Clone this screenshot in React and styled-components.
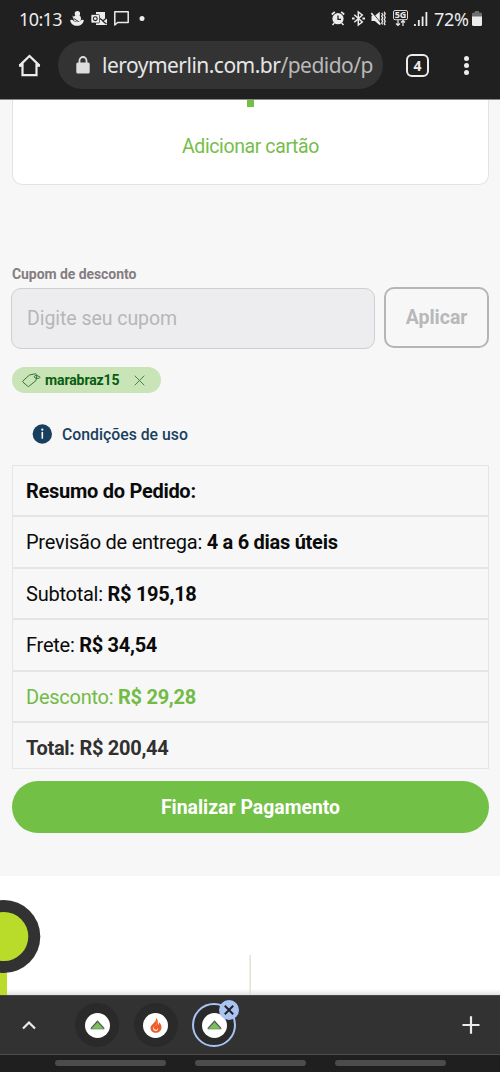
import React from "react";
import styled, { createGlobalStyle } from "styled-components";

const GlobalStyle = createGlobalStyle`
  * {
    box-sizing: border-box;
  }
  body {
    margin: 0;
    background: #ffffff;
    font-family: Roboto, "Liberation Sans", sans-serif;
  }
`;

const Screen = styled.div`
  width: 500px;
  height: 1072px;
  display: flex;
  flex-direction: column;
  overflow: hidden;
`;

/* browser header */
const Header = styled.header`
  height: 100px;
  background: #202020;
  border-bottom: 1px solid #8a8a8a;
  font-family: "Noto Sans", sans-serif;
  color: #ececec;
`;
const StatusBar = styled.div`
  height: 41px;
  display: flex;
  align-items: center;
  padding: 0 18px 4px 19px;
`;
const StatusText = styled.span`
  font-size: 18px;
  line-height: 20px;
  letter-spacing: ${(props) => props.$spacing || "0"};
  width: ${(props) => props.$width};
  white-space: nowrap;
`;
const StatusIcons = styled.div`
  display: flex;
  align-items: center;
  gap: ${(props) => props.$gap};
  margin-left: ${(props) => props.$left || "0"};
  svg {
    display: block;
    overflow: visible;
  }
`;
const Toolbar = styled.div`
  height: 48px;
  display: flex;
  align-items: center;
  padding: 0 28px 0 18px;
  svg {
    display: block;
    flex: none;
  }
`;
const AddressBar = styled.div`
  width: 325px;
  height: 48px;
  margin-left: 17px;
  padding: 0 9px 0 18px;
  border-radius: 24px;
  background: #333333;
  display: flex;
  align-items: center;
`;
const Url = styled.div`
  margin-left: 12px;
  width: 272px;
  overflow: hidden;
  white-space: nowrap;
  font-size: 21px;
  line-height: 30px;
  letter-spacing: -0.52px;
  color: #e6e6e6;
  span {
    color: #b9b9b9;
  }
`;
const TabCount = styled.div`
  width: 23px;
  height: 23px;
  margin-left: 23px;
  border: 2px solid #ececec;
  border-radius: 6px;
  font-size: 14px;
  font-weight: 700;
  line-height: 19px;
  text-align: center;
`;
const MenuDots = styled.div`
  margin-left: auto;
  margin-right: 3px;
  display: flex;
  flex-direction: column;
  gap: 2px;
  i {
    width: 5px;
    height: 5px;
    border-radius: 50%;
    background: #ececec;
  }
`;

/* checkout page */
const Page = styled.main`
  height: 776px;
  padding: 0 11px 0 12px;
  background: #f7f7f7;
`;
const CardBox = styled.section`
  height: 85px;
  display: flex;
  flex-direction: column;
  align-items: center;
  background: #ffffff;
  border: 1px solid #e3e3e3;
  border-top: 0;
  border-radius: 0 0 10px 10px;
`;
const PlusStem = styled.div`
  width: 7px;
  height: 7px;
  background: #72c045;
`;
const AddCard = styled.div`
  margin-top: 28px;
  font-size: 19.5px;
  line-height: 24px;
  letter-spacing: -0.4px;
  color: #76bd4c;
`;
const Label = styled.div`
  margin-top: 79px;
  font-size: 14px;
  font-weight: 700;
  line-height: 20px;
  letter-spacing: -0.07px;
  color: #857d82;
`;
const CouponRow = styled.div`
  display: flex;
  align-items: flex-start;
  margin: 3px 0 0 -1px;
`;
const CouponInput = styled.div`
  width: 365px;
  height: 61px;
  margin: 1px 9px 0 0;
  padding-left: 15px;
  border: 1px solid #cfcfd2;
  border-radius: 10px;
  background: #ededef;
  color: #b6b6b8;
  font-size: 19.5px;
  line-height: 60px;
  letter-spacing: -0.05px;
`;
const ApplyButton = styled.div`
  width: 105px;
  height: 61px;
  border: 2px solid #b5b5b6;
  border-radius: 10px;
  color: #b8b8bb;
  font-size: 19.5px;
  font-weight: 700;
  line-height: 57px;
  text-align: center;
`;
const CouponTag = styled.div`
  width: 149px;
  height: 26px;
  margin-top: 18px;
  padding: 0 16px 0 10px;
  border-radius: 13px;
  background: #c9e4b6;
  display: flex;
  align-items: center;
  color: #075c10;
  font-size: 14px;
  font-weight: 700;
  letter-spacing: -0.1px;
  line-height: 24px;
  span {
    margin: 0 auto 1px 4px;
  }
`;
const Terms = styled.div`
  display: flex;
  align-items: center;
  height: 22px;
  margin: 30px 0 0 20px;
  font-size: 15.8px;
  font-weight: 500;
  letter-spacing: 0;
  color: #193f5f;
  svg {
    margin-right: 10px;
  }
`;
const Summary = styled.section`
  margin-top: 20px;
  border: 1px solid #e5e5e5;
`;
const SummaryRow = styled.div`
  height: ${(props) => props.$height || "51.4px"};
  padding-left: 13px;
  border-bottom: ${(props) => (props.$last ? "0" : "2px solid #e5e5e5")};
  font-size: 20px;
  line-height: 50px;
  letter-spacing: -0.25px;
  color: ${(props) => props.$color || "#0b0b0b"};
  b {
    letter-spacing: -0.28px;
  }
`;
const PayButton = styled.div`
  height: 52px;
  margin-top: 12px;
  border-radius: 26px;
  background: #72c045;
  color: #ffffff;
  font-size: 19.4px;
  font-weight: 700;
  line-height: 53px;
  text-align: center;
`;

/* page footer and the tab strip under it */
const Tracker = styled.section`
  position: relative;
  height: 119px;
  overflow: hidden;
  background: linear-gradient(#ffffff 113px, #e2e2e2 119px);
  svg {
    display: block;
  }
`;
const TabStrip = styled.nav`
  height: 60px;
  padding: 0 19px 0 21px;
  display: flex;
  align-items: center;
  background: #323232;
  border-top: 1px solid #454545;
  border-bottom: 1px solid #4d4d4d;
`;
const Tabs = styled.div`
  display: flex;
  gap: 14.5px;
  margin-left: 38px;
`;
const Tab = styled.div`
  position: relative;
  width: 44px;
  height: 44px;
  display: flex;
  align-items: center;
  justify-content: center;
  border-radius: 50%;
  background: #2a2a2a;
  border: 2px solid ${(props) => (props.$active ? "#a9c4f3" : "#2a2a2a")};
`;
const Favicon = styled.div`
  width: 25px;
  height: 25px;
  border-radius: 50%;
  background: #ffffff;
  display: flex;
  align-items: center;
  justify-content: center;
`;
const CloseBadge = styled.div`
  position: absolute;
  top: -5px;
  right: -4.5px;
  width: 20px;
  height: 20px;
  border-radius: 50%;
  background: #a9c4f3;
  display: flex;
  align-items: center;
  justify-content: center;
`;
const PlusIcon = styled.svg`
  margin-left: auto;
`;
const NavBar = styled.div`
  flex: 1;
  padding: 5px 54.5px 0 54.5px;
  display: flex;
  justify-content: space-between;
  background: #1f1f1f;
  i {
    width: 111px;
    height: 6px;
    border-radius: 3px;
    background: #4c4c4c;
  }
`;

const GalaxyIcon = () => (
  <svg width="14" height="15" viewBox="0 0 14 15" fill="#ececec">
    <circle cx="7.400" cy="2.700" r="2.700" />
    <ellipse cx="7.300" cy="7.500" rx="3.700" ry="3.200" />
    <path d="M2.300 4.500 5 6.500 3.500 8z" />
    <path d="M.2 9.200c1.500-.8 2.500-.3 3.300.6 1.800 1.700 5 1.700 6.700 0 1.200-1.200 2.300-1.300 3.600-.6-.4 3.200-3 5.600-6.800 5.600S.6 12.400.2 9.200z" />
    <path d="m3.800 7.500 4.700 3" fill="none" stroke="#202020" strokeWidth=".9" />
  </svg>
);

const OutlookIcon = () => (
  <svg width="16" height="14" viewBox="0 0 16 14">
    <path d="M5 0h9v7H5z" fill="#ececec" />
    <path d="M5 6.500h11V13H5z" fill="#ececec" />
    <path d="m9 6.500 3 2.300L15.700 6M11.500 9l4 3" stroke="#202020" strokeWidth="1.200" fill="none" />
    <rect x="0" y="2.500" width="8.500" height="8.500" rx="1" fill="#ececec" stroke="#202020" strokeWidth=".7" />
    <circle cx="4.300" cy="6.700" r="1.900" fill="none" stroke="#202020" strokeWidth="1.100" />
  </svg>
);

const ChatIcon = () => (
  <svg width="15" height="15" viewBox="0 0 15 15" fill="none" stroke="#ececec" strokeWidth="1.500">
    <path d="M.8.8h13.400v10.700H3.600L.8 14z" strokeLinejoin="round" />
  </svg>
);

const AlarmIcon = () => (
  <svg width="14" height="15" viewBox="0 0 14 15" fill="none" stroke="#ececec">
    <circle cx="7" cy="7.700" r="5.600" fill="#ececec" stroke="none" />
    <path d="M.8 3.500 3.800.9M10.200.9l3 2.600" strokeWidth="1.700" />
    <path d="m3.300 12-1.800 2M10.700 12l1.800 2" strokeWidth="1.500" />
    <path d="M7 4.500v3.800h3" stroke="#202020" strokeWidth="1.300" />
  </svg>
);

const BluetoothIcon = () => (
  <svg width="13" height="15" viewBox="0 0 13 15" fill="none" stroke="#ececec" strokeWidth="1.500">
    <path d="m2.300 3.700 8 7.300-4 3V1l4 3-8 7.300" />
    <path d="M0 7.500h2.600M10.400 7.500H13" strokeWidth="1.900" />
  </svg>
);

const MuteIcon = () => (
  <svg width="15" height="15" viewBox="0 0 15 15" fill="none" stroke="#ececec">
    <path d="M.5 4.800h3.300L8.800.7v13.600l-5-4.300H.5z" fill="#ececec" stroke="none" />
    <path d="m1.500 1.500 8.300 10.500" stroke="#202020" strokeWidth=".9" />
    <path d="m.3 2 9 11.500" strokeWidth="1.600" />
    <path d="m10.700 1.800 1 1.700-1 1.700 1 1.700-1 1.700 1 1.700-1 1.700 1 1.500M13.200.8l1 1.900-1 1.900 1 1.900-1 1.900 1 1.900-1 1.900 1 1.900" strokeWidth="1.300" />
  </svg>
);

const NetworkIcon = () => (
  <svg width="15" height="17" viewBox="0 0 15 17" fill="none" stroke="#ececec">
    <rect x=".5" y=".5" width="14" height="9.200" rx="1.500" strokeWidth=".9" />
    <text x="7.500" y="8.100" fill="#ececec" stroke="none" fontSize="9" fontWeight="700" textAnchor="middle">5G</text>
    <path d="M5 10v5.500M3 13.500l2 2 2-2M10 16v-5.500M8 12.500l2-2 2 2" strokeWidth="1.200" />
  </svg>
);

const SignalIcon = () => (
  <svg width="14" height="14" viewBox="0 0 14 14" fill="#ececec">
    <rect x="0" y="12" width="1.800" height="2" />
    <rect x="3.900" y="8" width="1.800" height="6" />
    <rect x="7.700" y="4.500" width="1.800" height="9.500" />
    <rect x="11.500" y="0" width="1.800" height="14" />
  </svg>
);

const BatteryIcon = () => (
  <svg width="10" height="15" viewBox="0 0 10 15">
    <path d="M3 0h4v1.500h1.500A1.500 1.500 0 0 1 10 3v3H0V3a1.500 1.500 0 0 1 1.500-1.500H3z" fill="#6e6e6e" />
    <path d="M0 5.500h10v8A1.500 1.500 0 0 1 8.500 15h-7A1.500 1.500 0 0 1 0 13.500z" fill="#ececec" />
  </svg>
);

const HomeIcon = () => (
  <svg width="23" height="23" viewBox="0 0 23 23" fill="none" stroke="#ececec" strokeWidth="2.200">
    <path d="M1.500 11.600 11.500 2l10 9.600M4.500 9.500v11.700h14V9.500" />
    <path d="M1 11.700h3.500M18.500 11.700H22" />
  </svg>
);

const LockIcon = () => (
  <svg width="14" height="18" viewBox="0 0 14 18">
    <rect x=".3" y="6.500" width="13.400" height="11" rx="1.500" fill="#dedede" />
    <path d="M3.500 7V4.500a3.500 3.500 0 0 1 7 0V7" fill="none" stroke="#dedede" strokeWidth="1.800" />
  </svg>
);

const TagIcon = () => (
  <svg width="19" height="16" viewBox="0 0 19 16" fill="none" stroke="#28682b" strokeWidth=".9">
    <path d="M1.200 8.600 7.500 3l5.800-1.200c.9 0 1.600.8 1.500 1.700L14 8.500 7.300 14c-.7.600-1.500.5-2-.1L1 10.200c-.4-.5-.3-1.200.2-1.600z" />
    <path d="M12.500 4c.9-.8 2-.6 3.200-.1l2.100.9c.3 1-.6 1.700-1.800 1.600l-3-.5c-.8-.4-.9-1.300-.5-1.900z" />
  </svg>
);

const CloseIcon = () => (
  <svg width="11" height="11" viewBox="0 0 11 11" stroke="#3d7740" strokeWidth=".9">
    <path d="m.7.7 9.600 9.600M10.300.7.700 10.300" />
  </svg>
);

const InfoIcon = () => (
  <svg width="20" height="20" viewBox="0 0 20 20">
    <circle cx="10.300" cy="10" r="9.700" fill="#193f5f" />
    <path d="M10.300 7.900v6.800" stroke="#fff" strokeWidth="1.600" />
    <circle cx="10.300" cy="5.700" r="1.100" fill="#fff" />
  </svg>
);

const RoofLogo = () => (
  <svg width="15" height="10" viewBox="0 0 15 10">
    <path d="M7.500 1.500 13.500 9h-12z" fill="#78c257" />
    <path d="M.8 8.800 7.500 1.200l6.700 7.600" fill="none" stroke="#565d59" strokeWidth="1.300" />
    <path d="M1 9h13" stroke="#6b8a60" strokeWidth=".7" />
  </svg>
);

const FlameLogo = () => (
  <svg width="12" height="15" viewBox="0 0 12 15">
    <path d="M6 0c.5 2.500-1.200 4-2.700 5.500C1.500 7.200.5 8.300.5 10c0 2.800 2.300 4.800 5.200 4.800 3.300 0 5.800-2.200 5.800-5.300 0-2.300-1-4.100-2.500-5 .2 1.200-.1 2-.8 2.500C8.400 4.200 8 1.500 6 0z" fill="#ed5a2b" />
    <path d="M4.200 8.300c-.8 1.700-.2 3.300 1.500 3.500 1.500.1 2.200-1 1.600-2.400 1.300 1.100.8 3.400-1.400 3.500-2.700.1-3.700-2.600-1.700-4.600z" fill="#fff3ea" />
    <path d="M7 1.800c1 2.500-.2 4.700-1.800 6.300" fill="none" stroke="#f6a03c" strokeWidth=".9" />
  </svg>
);

const TrackerDrawing = () => (
  <svg width="500" height="119" viewBox="0 0 500 119">
    <path d="M0 85h7v34H0z" fill="#b9dc2b" />
    <circle cx="3.800" cy="60.500" r="36.500" fill="#323232" />
    <circle cx="3.800" cy="60.500" r="24.500" fill="#b9dc2b" />
    <path d="M249.500 79h1.300v40h-1.300z" fill="#d5e3c5" />
  </svg>
);

const App = () => {
  return (
    <>
      <GlobalStyle />
      <Screen>
        <Header>
          <StatusBar>
            <StatusText $width="43px" $spacing="-0.6px">10:13</StatusText>
            <StatusIcons $gap="7px" $left="8px">
              <GalaxyIcon />
              <OutlookIcon />
              <ChatIcon />
              <svg width="19" height="5" viewBox="0 0 19 5"><circle cx="6" cy="2.500" r="2.500" fill="#ececec" /></svg>
            </StatusIcons>
            <StatusIcons $gap="6.500px" $left="auto">
              <AlarmIcon />
              <BluetoothIcon />
              <MuteIcon />
              <NetworkIcon />
              <SignalIcon />
            </StatusIcons>
            <StatusIcons $gap="3px" $left="6px">
              <StatusText $width="35px" $spacing="-0.3px">72%</StatusText>
              <BatteryIcon />
            </StatusIcons>
          </StatusBar>
          <Toolbar>
            <HomeIcon />
            <AddressBar>
              <LockIcon />
              <Url>leroymerlin.com.br<span>/pedido/p</span></Url>
            </AddressBar>
            <TabCount>4</TabCount>
            <MenuDots><i /><i /><i /></MenuDots>
          </Toolbar>
        </Header>

        <Page>
          <CardBox>
            <PlusStem />
            <AddCard>Adicionar cartão</AddCard>
          </CardBox>
          <Label>Cupom de desconto</Label>
          <CouponRow>
            <CouponInput>Digite seu cupom</CouponInput>
            <ApplyButton>Aplicar</ApplyButton>
          </CouponRow>
          <CouponTag>
            <TagIcon />
            <span>marabraz15</span>
            <CloseIcon />
          </CouponTag>
          <Terms>
            <InfoIcon />
            Condições de uso
          </Terms>
          <Summary>
            <SummaryRow><b>Resumo do Pedido:</b></SummaryRow>
            <SummaryRow>Previsão de entrega: <b>4 a 6 dias úteis</b></SummaryRow>
            <SummaryRow>Subtotal: <b>R$ 195,18</b></SummaryRow>
            <SummaryRow>Frete: <b>R$ 34,54</b></SummaryRow>
            <SummaryRow $color="#72bb45">Desconto: <b>R$ 29,28</b></SummaryRow>
            <SummaryRow $last $height="45px" $color="#303030"><b>Total: R$ 200,44</b></SummaryRow>
          </Summary>
          <PayButton>Finalizar Pagamento</PayButton>
        </Page>

        <Tracker>
          <TrackerDrawing />
        </Tracker>

        <TabStrip>
          <svg width="16" height="10" viewBox="0 0 16 10" fill="none" stroke="#ececec" strokeWidth="2.200">
            <path d="m2 8.500 6-6 6 6" />
          </svg>
          <Tabs>
            <Tab><Favicon><RoofLogo /></Favicon></Tab>
            <Tab><Favicon><FlameLogo /></Favicon></Tab>
            <Tab $active>
              <Favicon><RoofLogo /></Favicon>
              <CloseBadge>
                <svg width="10" height="10" viewBox="0 0 10 10" stroke="#202124" strokeWidth="2">
                  <path d="m.8.8 8.400 8.400M9.200.8.800 9.200" />
                </svg>
              </CloseBadge>
            </Tab>
          </Tabs>
          <PlusIcon width="20" height="18" viewBox="0 0 20 18" stroke="#ececec" strokeWidth="2.200">
            <path d="M1.500 9h17M10 .3v17.400" />
          </PlusIcon>
        </TabStrip>
        <NavBar><i /><i /><i /></NavBar>
      </Screen>
    </>
  );
};

export default App;
